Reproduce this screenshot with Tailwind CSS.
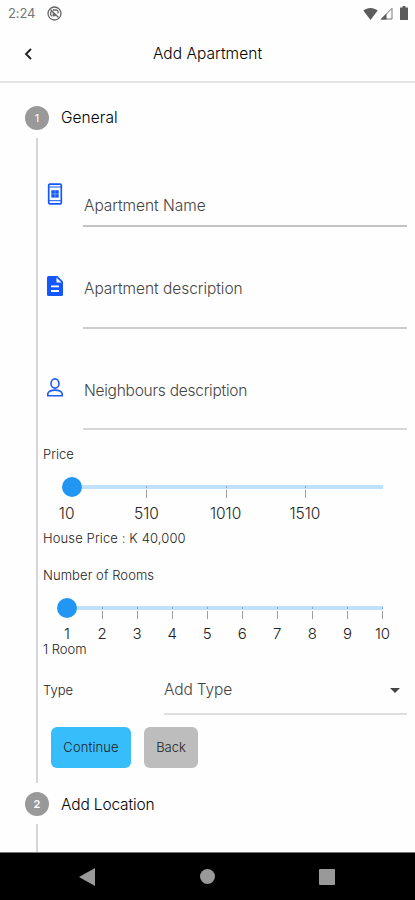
<!DOCTYPE html>
<html lang="en">
<head>
  <meta charset="UTF-8">
  <meta name="viewport" content="width=device-width, initial-scale=1.0">
  <title>Add Apartment</title>
  <script src="https://cdn.jsdelivr.net/npm/@tailwindcss/browser@4"></script>
</head>
<body class="bg-[#fefefe] font-['Inter','Liberation_Sans',sans-serif] text-[#222]">
  <div class="flex h-[900px] w-[415px] flex-col overflow-hidden">

    <!-- Status bar -->
    <div class="flex h-[26px] shrink-0 items-center pr-[7px] pl-[8px] text-[#757575]">
      <span class="w-[39px] pt-px text-[13px] tracking-[-0.1px]">2:24</span>
      <svg class="size-[15px]" viewBox="0 0 15 15" fill="none" stroke="#666" stroke-width="1.3">
        <circle cx="7.5" cy="7.5" r="6.5" />
        <path d="M3.5 3.5l8 8M5 10.3a3.7 3.7 0 0 1-.6-5M6 4h3.2a2 2 0 0 1 1.5 3.3" />
        <path d="M5.6 6.2l4 3.8-4 .6z" fill="#666" stroke="none" />
      </svg>
      <svg class="ml-auto h-[13px] w-[15px]" viewBox="0 0 15 13" fill="#5c5c5c"><path d="M7.500 13L.3 3.600C4.500 0 10.500 0 14.700 3.600z" /></svg>
      <svg class="ml-[2px] h-[13px] w-[13px]" viewBox="0 0 13 13"><path d="M1.500 12L12 1.300V12z" fill="none" stroke="#777" /><path d="M.5 12.500L6.500 6.500V12.500z" fill="#5c5c5c" /></svg>
      <svg class="ml-[7px] h-[14px] w-[8px]" viewBox="0 0 8 14" fill="#5c5c5c"><path d="M2.500 0h3v1.500H8V14H0V1.500h2.500z" /></svg>
    </div>

    <!-- App bar -->
    <header class="grid h-[57px] shrink-0 grid-cols-[1fr_auto_1fr] items-center border-b-2 border-[#e4e4e4]">
      <svg class="ml-[24px] h-[12px] w-[8px]" viewBox="0 0 8 12" fill="none" stroke="#222" stroke-width="1.900"><path d="M7 1L2 6l5 5" /></svg>
      <h1 class="text-[15.5px] font-light tracking-[0.05px] text-black">Add Apartment</h1>
      <span></span>
    </header>

    <main class="flex grow flex-col overflow-hidden">
      <!-- Step 1 -->
      <div class="mt-[23px] flex h-6 shrink-0 items-center gap-3 pl-[25px]">
        <span class="flex size-6 items-center justify-center rounded-full bg-[#999] text-[11px] text-white">1</span>
        <h2 class="text-[15.5px] font-light tracking-[0.05px] text-black">General</h2>
      </div>

      <div class="mt-[8px] ml-[36px] h-[645px] shrink-0 border-l-2 border-[#d6d6d6] pl-[5px]">
        <div class="flex h-[89px] items-end pr-[8px]">
          <svg class="mr-[20px] mb-[22px] ml-[4px] h-[22px] w-[16px] shrink-0" viewBox="0 0 16 22">
            <rect x="1.700" y="1.200" width="12.600" height="19.600" rx="1" fill="none" stroke="#1557ff" stroke-width="1.700" />
            <path d="M2 4h12M2 17.700h12" stroke="#1557ff" />
            <path d="M4.300 7.200h7.400v7.400H4.300z" fill="#1557ff" />
            <path d="M8 7v8M4 11h8" stroke="#9dbbff" stroke-width=".6" />
          </svg>
          <div class="flex h-[37px] grow items-center border-b-2 border-[#c4c4c4] pb-[4px] pl-px text-[15.5px] font-light tracking-[-0.05px] text-[#444]">Apartment Name</div>
        </div>

        <div class="flex h-[102px] items-end pr-[8px]">
          <svg class="mr-[20px] mb-[33px] ml-[4px] h-[20px] w-[16px] shrink-0" viewBox="0 0 16 20">
            <path d="M1.500 0H10.500L16 5.500V18.500Q16 20 14.500 20H1.500Q0 20 0 18.500V1.500Q0 0 1.500 0z" fill="#1557ff" />
            <path d="M9.500 1.500V6.500H14.500zM4 9.500h8v1.700H4zM4 14h8v2H4z" fill="#fff" />
          </svg>
          <div class="flex h-[60px] grow items-center border-b-2 border-[#cecece] pb-[18px] pl-px text-[15.5px] font-light tracking-[-0.05px] text-[#444]">Apartment description</div>
        </div>

        <div class="flex h-[101px] items-end pr-[8px]">
          <svg class="mr-[20px] mb-[33px] ml-[4px] h-[19px] w-[16px] shrink-0" viewBox="0 0 16 19" fill="none" stroke="#1d5cf5" stroke-width="1.600">
            <ellipse cx="8" cy="5.500" rx="4" ry="4.600" />
            <path d="M.8 17.800V15.500C2.500 11 13.500 11 15.200 15.500V17.800z" />
          </svg>
          <div class="flex h-[60px] grow items-center border-b-2 border-[#d6d6d6] pb-[17px] pl-px text-[15.5px] font-light tracking-[-0.25px] text-[#444]">Neighbours description</div>
        </div>

        <!-- Price slider -->
        <p class="mt-[15px] flex h-[20px] items-center text-[13px] font-light">Price</p>
        <div class="mt-[12px] mr-[32px] ml-[19px] flex h-[20px] items-center">
          <span class="size-[20px] shrink-0 rounded-full bg-[#2196f3]"></span>
          <span class="h-1 grow bg-[#bfe1fd]"></span>
        </div>
        <div class="-mt-[11px] -ml-[15px] grid w-[317px] grid-cols-4 text-center text-[15.5px] font-light">
          <div class="pt-[12px] pr-[2px] leading-[31px]">10</div>
          <div><span class="mx-auto block h-[12px] w-px bg-[linear-gradient(#8aa5bb_2px,transparent_2px,transparent_4px,#9e9e9e_4px)]"></span><span class="block pr-px leading-[31px]">510</span></div>
          <div><span class="mx-auto block h-[12px] w-px bg-[linear-gradient(#8aa5bb_2px,transparent_2px,transparent_4px,#9e9e9e_4px)]"></span><span class="block pr-px leading-[31px]">1010</span></div>
          <div><span class="mx-auto block h-[12px] w-px bg-[linear-gradient(#8aa5bb_2px,transparent_2px,transparent_4px,#9e9e9e_4px)]"></span><span class="block pr-px leading-[31px]">1510</span></div>
        </div>
        <p class="flex h-[20px] items-center text-[13px] font-light tracking-[0.12px]">House Price : K 40,000</p>

        <!-- Rooms slider -->
        <p class="mt-[17px] flex h-[20px] items-center text-[13px] font-light tracking-[0.08px]">Number of Rooms</p>
        <div class="mt-[12px] mr-[32px] ml-[14px] flex h-[20px] items-center">
          <span class="size-[20px] shrink-0 rounded-full bg-[#2196f3]"></span>
          <span class="h-1 grow bg-[#bfe1fd]"></span>
        </div>
        <div class="-mt-[11px] ml-[6.500px] grid w-[350.500px] grid-cols-10 text-center text-[15px] font-light">
          <div class="pt-[12px] leading-[30px]">1</div>
          <div><span class="mx-auto block h-[12px] w-px bg-[linear-gradient(#8aa5bb_2px,transparent_2px,transparent_4px,#9e9e9e_4px)]"></span><span class="block leading-[30px]">2</span></div>
          <div><span class="mx-auto block h-[12px] w-px bg-[linear-gradient(#8aa5bb_2px,transparent_2px,transparent_4px,#9e9e9e_4px)]"></span><span class="block leading-[30px]">3</span></div>
          <div><span class="mx-auto block h-[12px] w-px bg-[linear-gradient(#8aa5bb_2px,transparent_2px,transparent_4px,#9e9e9e_4px)]"></span><span class="block leading-[30px]">4</span></div>
          <div><span class="mx-auto block h-[12px] w-px bg-[linear-gradient(#8aa5bb_2px,transparent_2px,transparent_4px,#9e9e9e_4px)]"></span><span class="block leading-[30px]">5</span></div>
          <div><span class="mx-auto block h-[12px] w-px bg-[linear-gradient(#8aa5bb_2px,transparent_2px,transparent_4px,#9e9e9e_4px)]"></span><span class="block leading-[30px]">6</span></div>
          <div><span class="mx-auto block h-[12px] w-px bg-[linear-gradient(#8aa5bb_2px,transparent_2px,transparent_4px,#9e9e9e_4px)]"></span><span class="block leading-[30px]">7</span></div>
          <div><span class="mx-auto block h-[12px] w-px bg-[linear-gradient(#8aa5bb_2px,transparent_2px,transparent_4px,#9e9e9e_4px)]"></span><span class="block leading-[30px]">8</span></div>
          <div><span class="mx-auto block h-[12px] w-px bg-[linear-gradient(#8aa5bb_2px,transparent_2px,transparent_4px,#9e9e9e_4px)]"></span><span class="block leading-[30px]">9</span></div>
          <div><span class="mx-auto block h-[12px] w-px bg-[linear-gradient(#8aa5bb_2px,transparent_2px,transparent_4px,#9e9e9e_4px)]"></span><span class="block leading-[30px]">10</span></div>
        </div>
        <p class="-mt-[7px] flex h-[16px] items-center text-[13px] font-light">1 Room</p>

        <!-- Type select -->
        <div class="mt-[19px] flex h-[38px] pr-[8px]">
          <span class="w-[121px] pt-[3px] text-[13px] leading-[20px] font-light">Type</span>
          <div class="flex grow items-start justify-between border-b-2 border-[#dedede] pr-[7px] text-[15.5px] font-light text-[#444]">
            <span class="pt-[3px] leading-[20px] tracking-[-0.15px]">Add Type</span>
            <svg class="mt-[11px] h-[5px] w-[10px]" viewBox="0 0 10 5" fill="#444"><path d="M0 0h10L5 5z" /></svg>
          </div>
        </div>

        <div class="mt-[12px] flex gap-[13px] pl-[8px]">
          <button class="h-[41px] w-[80px] rounded-[6px] bg-[#38bdfb] text-[13px] font-light tracking-[0.1px]">Continue</button>
          <button class="h-[41px] w-[54px] rounded-[6px] bg-[#bdbdbd] text-[13px] font-light">Back</button>
        </div>
      </div>

      <!-- Step 2 -->
      <div class="mt-[9px] flex h-6 shrink-0 items-center gap-3 pl-[25px]">
        <span class="flex size-6 items-center justify-center rounded-full bg-[#999] text-[11px] font-semibold text-white">2</span>
        <h2 class="pt-px text-[15.5px] font-light tracking-[-0.15px] text-black">Add Location</h2>
      </div>
      <div class="mt-[8px] ml-[36px] grow border-l-2 border-[#d6d6d6]"></div>
    </main>

    <!-- Android navigation -->
    <nav class="grid h-[48px] shrink-0 grid-cols-[119px_120px_120px] items-center justify-center border-t border-[#777] bg-black">
      <svg class="mr-auto ml-[51px] h-[18px] w-[16px]" viewBox="0 0 16 18" fill="#999"><path d="M16 0v18L0 9z" /></svg>
      <span class="mx-auto size-[15px] rounded-full bg-[#999]"></span>
      <span class="mx-auto size-[16px] rounded-[1px] bg-[#999]"></span>
    </nav>
  </div>
</body>
</html>
